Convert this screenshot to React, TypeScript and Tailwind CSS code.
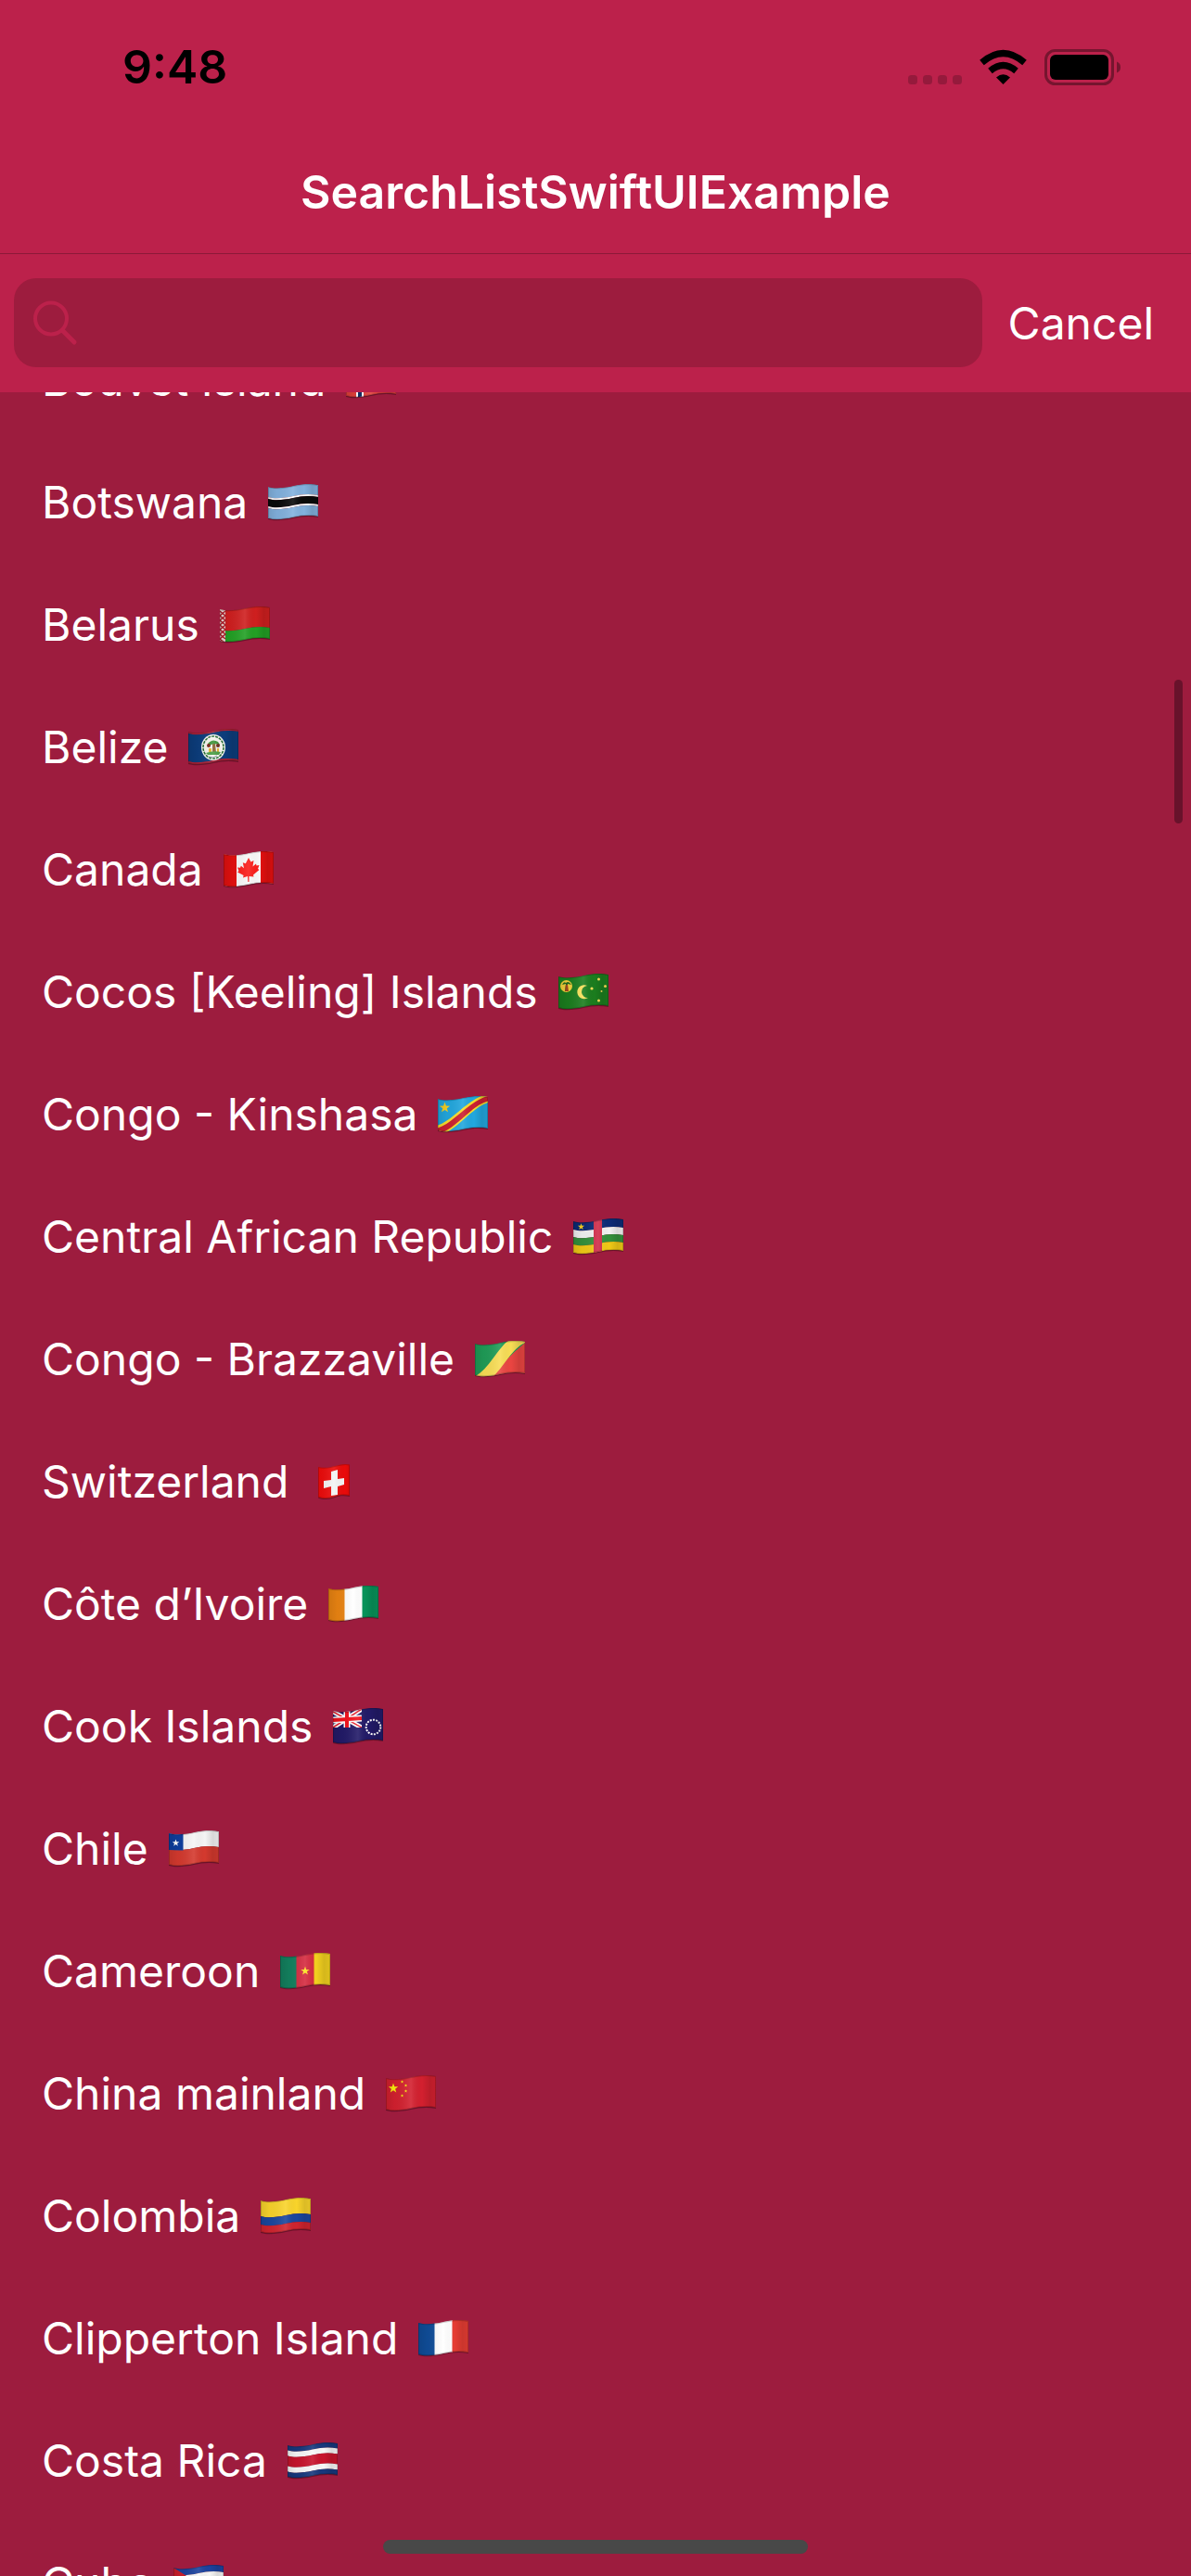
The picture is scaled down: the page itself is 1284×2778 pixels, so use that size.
import { useId } from "react";
import type { ReactNode } from "react";

const FLAG_WIDTH = 54;
const FLAG_HEIGHT = 34;

/** Closed path of a waving band that runs from depth `from` to depth `to`. */
function band(from: number, to: number) {
  return [
    `M0 ${3 + from}`,
    `C8 ${5.5 + from} 18 ${4 + from} 27 ${2 + from}`,
    `S44 ${-1 + from} ${FLAG_WIDTH} ${1 + from}`,
    `V${1 + to}`,
    `C44 ${-1 + to} 36 ${0 + to} 27 ${2 + to}`,
    `S8 ${5.5 + to} 0 ${3 + to}`,
    "Z",
  ].join(" ");
}

const SWISS_OUTLINE = "M10 4 C18 6 24 4 28 3 S38 0 44 1.500 V35 C38 33.500 33 34 28 36 S16 39 10 36.500 Z";

function Star({ x, y, r, fill }: { x: number; y: number; r: number; fill: string }) {
  const points = Array.from({ length: 10 }, (_, i) => {
    const radius = i % 2 === 0 ? r : r * 0.4;
    const angle = (Math.PI / 5) * i - Math.PI / 2;
    return `${x + radius * Math.cos(angle)},${y + radius * Math.sin(angle)}`;
  }).join(" ");
  return <polygon points={points} fill={fill} />;
}

function Flag({ label, outline, children }: { label: string; outline?: string; children: ReactNode }) {
  const id = useId();
  const shape = outline ?? band(0, FLAG_HEIGHT);
  return (
    <svg role="img" aria-label={label} viewBox="0 0 54 40" className="h-10 w-[54px] shrink-0">
      <defs>
        <clipPath id={`${id}clip`}>
          <path d={shape} />
        </clipPath>
        <linearGradient id={`${id}shade`} x1="0" x2="1" y1="0" y2="0">
          <stop offset="0" stopColor="#000" stopOpacity="0.12" />
          <stop offset="0.18" stopColor="#000" stopOpacity="0.04" />
          <stop offset="0.5" stopColor="#fff" stopOpacity="0.1" />
          <stop offset="0.72" stopColor="#000" stopOpacity="0" />
          <stop offset="0.88" stopColor="#000" stopOpacity="0.12" />
          <stop offset="1" stopColor="#000" stopOpacity="0.08" />
        </linearGradient>
      </defs>
      <path d={shape} fill="#3a0a18" opacity="0.5" transform="translate(0 1)" />
      <g clipPath={`url(#${id}clip)`}>
        {children}
        <rect width="54" height="40" fill={`url(#${id}shade)`} />
        <path d={shape} fill="none" stroke="#000" strokeOpacity="0.18" strokeWidth="2" />
      </g>
    </svg>
  );
}

function Bands({ colors }: { colors: [string, number][] }) {
  let depth = 0;
  return (
    <>
      {colors.map(([color, size], i) => {
        const start = depth;
        depth += size;
        return <path key={i} d={band(start, depth)} fill={color} />;
      })}
    </>
  );
}

function Pales({ colors }: { colors: [string, string, string] }) {
  return (
    <>
      <rect width="18" height="40" fill={colors[0]} />
      <rect x="17.500" width="19.500" height="40" fill={colors[1]} />
      <rect x="36.500" width="18" height="40" fill={colors[2]} />
    </>
  );
}

const flags: Record<string, ReactNode> = {
  "Bouvet Island": (
    <>
      <Bands colors={[["#e0403a", FLAG_HEIGHT]]} />
      <path d={band(13, 21)} fill="#fff" />
      <rect x="11" width="8" height="40" fill="#fff" />
      <path d={band(15, 19)} fill="#102a63" />
      <rect x="13" width="4" height="40" fill="#102a63" />
    </>
  ),
  Botswana: (
    <Bands colors={[["#82b1de", 11], ["#fff", 2], ["#0a0a0a", 8], ["#fff", 2], ["#82b1de", 11]]} />
  ),
  Belarus: (
    <>
      <Bands colors={[["#cf1f1f", 22], ["#22a024", 12]]} />
      <rect width="6" height="40" fill="#f1dcd8" />
      <path
        d="M0 5l6 5-6 5 6 5-6 5 6 5-6 5 6 5M6 5l-6 5 6 5-6 5 6 5-6 5 6 5"
        fill="none"
        stroke="#b5202c"
        strokeWidth="1.500"
      />
    </>
  ),
  Belize: (
    <>
      <Bands colors={[["#b3243a", 2], ["#0c3d7c", 30], ["#b3243a", 2]]} />
      <ellipse cx="27" cy="20" rx="13" ry="14" fill="#f5f5ee" />
      <ellipse cx="27" cy="20" rx="11" ry="12" fill="none" stroke="#226b32" strokeWidth="1.500" strokeDasharray="3 1" />
      <path d="M26 16h3l1 10h-4z" fill="#8b6430" />
      <path d="M21 16q5-6 11-2l2 3-7-1-6 3z" fill="#3d9438" />
      <circle cx="22" cy="18" r="2" fill="#7a2319" />
      <circle cx="32" cy="18" r="2" fill="#6b2a1c" />
      <path d="M22 21h3v4h-3zM31 21h2v4h-2z" fill="#e9b62f" />
      <path d="M19 26q8-3 16-1l-2 3H21z" fill="#4a9d44" />
      <path d="M22 30q5 2 9-1" stroke="#8c98a6" fill="none" />
    </>
  ),
  Canada: (
    <>
      <Bands colors={[["#f8f8f8", FLAG_HEIGHT]]} />
      <rect width="14" height="40" fill="#e4100f" />
      <rect x="40" width="14" height="40" fill="#e4100f" />
      <path
        d="M27 7l2.500 4.500 3-1.500-1 6.500 3.500-3 .5 2 3-.5-1.500 4 1.500 1-6.500 5.500.5 2-5-.5v6h-1.200l-.3-6-5 1.500.6-2.500-6.600-3.500 1.500-1.200-1.500-3.800 3 .2.800-2 3.200 2.600-1.200-6 3 1z"
        fill="#fb1d1a"
      />
    </>
  ),
  "Cocos [Keeling] Islands": (
    <>
      <Bands colors={[["#1b7d1e", FLAG_HEIGHT]]} />
      <circle cx="8.500" cy="13.500" r="6.500" fill="#f2cf3b" />
      <path d="M4 12q2-4 4-2 3-3 6 2l-4-1v8H7l1-8z" fill="#226a20" />
      <path d="M8 12h2l1 7H7z" fill="#a0481e" />
      <path d="M31 13a7.500 7.500 0 1 0 1 13 6.500 6.500 0 1 1-1-13z" fill="#f8e05a" />
      <circle cx="36" cy="16" r="1.600" fill="#f8e05a" />
      <circle cx="43.500" cy="6" r="1.500" fill="#f8e05a" />
      <circle cx="50.500" cy="13.500" r="1.500" fill="#f8e05a" />
      <circle cx="46.500" cy="19" r="1" fill="#f8e05a" />
      <circle cx="43.500" cy="29" r="1.500" fill="#f8e05a" />
    </>
  ),
  "Congo - Kinshasa": (
    <>
      <Bands colors={[["#22a7de", FLAG_HEIGHT]]} />
      <path d="M-2 32C14 29 30 5 52-2L58 6C38 10 24 34 4 42z" fill="#f7dd2b" />
      <path d="M-2 35C16 31 32 6 54 0L57 5C37 8 24 32 3 40z" fill="#cc2030" />
      <Star x={7.5} y={12.5} r={6} fill="#f5cf22" />
    </>
  ),
  "Central African Republic": (
    <>
      <Bands colors={[["#0c2b76", 9], ["#f2f2f2", 8], ["#33913c", 8], ["#f0c916", 9]]} />
      <rect x="22" width="9" height="40" fill="#d12c49" />
      <Star x={8.5} y={9} r={3.8} fill="#f5cf22" />
    </>
  ),
  "Congo - Brazzaville": (
    <>
      <Bands colors={[["#1f9c57", FLAG_HEIGHT]]} />
      <path d="M54 0V40H18Q32 20 54 2z" fill="#ea4541" />
      <path d="M0 38C14 32 26 6 36 0H54V2C40 8 30 30 18 40H0z" fill="#f8dd55" />
    </>
  ),
  Switzerland: (
    <>
      <rect width="54" height="40" fill="#ea0a0a" />
      <path d="M24 9l7-2v10l7-1v7l-7 2v9l-7 1v-10l-8 2v-8l8-1z" fill="#f3f3f3" />
    </>
  ),
  "Côte d’Ivoire": <Pales colors={["#ea8412", "#fff", "#07935a"]} />,
  "Cook Islands": (
    <>
      <Bands colors={[["#221a68", FLAG_HEIGHT]]} />
      <svg x="0" y="0" width="31" height="21" viewBox="0 0 31 21">
        <path d="M0 4l31 17M0 21L31 1" stroke="#fff" strokeWidth="5" />
        <path d="M0 4l31 17M0 21L31 1" stroke="#ea1d2a" strokeWidth="1.500" />
        <path d="M15 0v22M0 13l31-2" stroke="#fff" strokeWidth="7" />
        <path d="M15 0v22M0 13l31-2" stroke="#f3121c" strokeWidth="4" />
      </svg>
      <circle cx="43.500" cy="20.500" r="7.800" fill="none" stroke="#fff" strokeWidth="2" strokeDasharray="2 1.270" />
    </>
  ),
  Chile: (
    <>
      <Bands colors={[["#f5f5f5", 17], ["#d4392e", 17]]} />
      <path d="M0 0H15.500V21.500L0 21z" fill="#0d3e9e" />
      <Star x={7.5} y={13.5} r={4} fill="#fff" />
    </>
  ),
  Cameroon: (
    <>
      <Pales colors={["#13815f", "#d52b40", "#f2d01f"]} />
      <Star x={27} y={19.5} r={5} fill="#fbe222" />
    </>
  ),
  "China mainland": (
    <>
      <Bands colors={[["#d3202f", FLAG_HEIGHT]]} />
      <Star x={8} y={14} r={5.5} fill="#fbee0e" />
      <Star x={17.5} y={7} r={1.8} fill="#fbee0e" />
      <Star x={21.5} y={11} r={1.8} fill="#fbee0e" />
      <Star x={21.5} y={17} r={1.8} fill="#fbee0e" />
      <Star x={17.5} y={22} r={1.8} fill="#fbee0e" />
    </>
  ),
  Colombia: <Bands colors={[["#f9d42b", 17], ["#1a479e", 9], ["#d0242f", 8]]} />,
  "Clipperton Island": <Pales colors={["#0f4d99", "#fff", "#e63d33"]} />,
  "Costa Rica": (
    <Bands colors={[["#17387d", 5.5], ["#f8f8f8", 6], ["#c8142d", 11], ["#f8f8f8", 6], ["#17387d", 5.5]]} />
  ),
  Cuba: (
    <>
      <Bands colors={[["#1b429e", 7], ["#f5f5f5", 7], ["#1b429e", 7], ["#f5f5f5", 7], ["#1b429e", 6]]} />
      <path d="M0 3L27 20 0 37z" fill="#cf1f2c" />
      <Star x={9} y={20} r={5} fill="#fff" />
    </>
  ),
};

function StatusIcons() {
  return (
    <svg aria-hidden="true" viewBox="0 0 230 40" className="h-10 w-[230px]">
      <g fill="#951a3c">
        <rect x="1" y="29" width="10" height="10" rx="3.500" />
        <rect x="17" y="29" width="10" height="10" rx="3.500" />
        <rect x="33" y="29" width="10" height="10" rx="3.500" />
        <rect x="49" y="29" width="10" height="10" rx="3.500" />
      </g>
      <path d="M103.500 39L96 31.500Q103.500 25 111 31.500Z" />
      <g fill="none" stroke="#000" strokeWidth="7">
        <path d="M89.500 24.500Q103.500 12.500 117.500 24.500" />
        <path d="M80.500 15.500Q103.500-4.500 126.500 15.500" />
      </g>
      <rect x="149.500" y="2.500" width="72" height="36" rx="10" fill="none" stroke="#76152f" strokeWidth="3" />
      <rect x="154" y="7" width="63" height="27" rx="6" />
      <path d="M226 14.500Q230 16 230 20.500T226 26.500Z" fill="#76152f" />
    </svg>
  );
}

export default function App() {
  return (
    <div className="relative flex h-screen flex-col overflow-hidden bg-[#9d1c3e] font-[Inter,sans-serif] text-5xl leading-[60px] text-white">
      <header className="shrink-0 bg-[#bc214b]">
        <div className="flex h-[141px] items-center justify-between pt-[3px] pr-[76px] pl-[132px] text-[50px] font-semibold text-black">
          <time>9:48</time>
          <StatusIcons />
        </div>
        <h1 className="flex h-[133px] items-center justify-center border-b border-[#8c1938] text-[50px] font-semibold">
          SearchListSwiftUIExample
        </h1>
        <form
          role="search"
          className="flex items-center pt-[26px] pr-10 pb-[27px] pl-[15px]"
          onSubmit={(e) => e.preventDefault()}
        >
          <label className="flex h-24 min-w-0 flex-1 items-center rounded-3xl bg-[#9d1c3e] pl-5">
            <svg
              aria-hidden="true"
              viewBox="0 0 50 50"
              className="size-[50px] shrink-0"
              fill="none"
              stroke="#bc214b"
              strokeLinecap="round"
            >
              <circle cx="20" cy="20.500" r="17" strokeWidth="4" />
              <path d="M32.500 33.500L45 46" strokeWidth="5" />
            </svg>
            <input type="text" aria-label="Search" className="h-full min-w-0 flex-1 bg-transparent px-3 outline-none" />
          </label>
          <button type="button" className="ml-7 shrink-0 pt-0.5">
            Cancel
          </button>
        </form>
      </header>

      <main className="min-h-0 flex-1 overflow-hidden">
        <ul className="-mt-[79px]">
          {Object.entries(flags).map(([name, art]) => (
            <li key={name} className="flex h-33 items-center gap-[22px] px-[45px]">
              <span>{name}</span>
              <Flag label={`Flag of ${name}`} outline={name === "Switzerland" ? SWISS_OUTLINE : undefined}>
                {art}
              </Flag>
            </li>
          ))}
        </ul>
      </main>

      <div className="absolute top-[733px] right-[9px] h-[155px] w-[9px] rounded-full bg-[#68122b]" />
      <div className="absolute bottom-6 left-1/2 h-[15px] w-[458px] -translate-x-1/2 rounded-full bg-[#484848]" />
    </div>
  );
}
